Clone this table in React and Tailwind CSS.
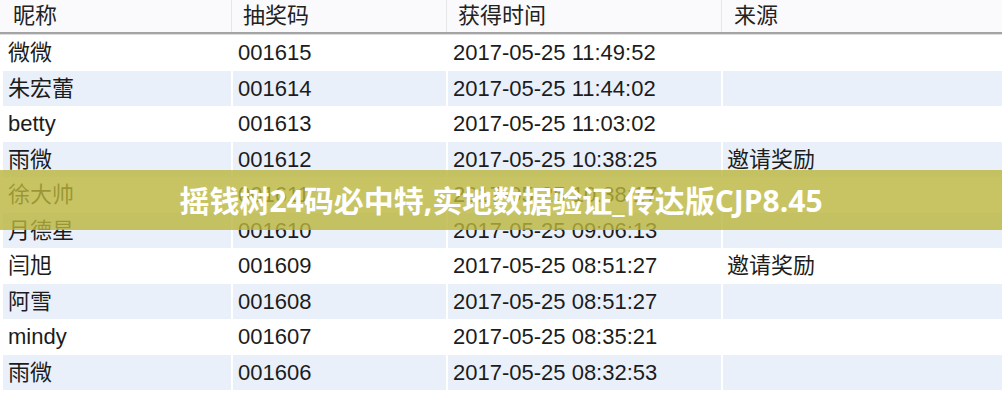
const FONT = { fontFamily: '"Liberation Sans", "Noto Sans CJK SC", sans-serif' }

const rows = [
  ['微微', '001615', '2017-05-25 11:49:52', ''],
  ['朱宏蕾', '001614', '2017-05-25 11:44:02', ''],
  ['betty', '001613', '2017-05-25 11:03:02', ''],
  ['雨微', '001612', '2017-05-25 10:38:25', '邀请奖励'],
  ['徐大帅', '001611', '2017-05-25 10:38:17', ''],
  ['月德星', '001610', '2017-05-25 09:06:13', ''],
  ['闫旭', '001609', '2017-05-25 08:51:27', '邀请奖励'],
  ['阿雪', '001608', '2017-05-25 08:51:27', ''],
  ['mindy', '001607', '2017-05-25 08:35:21', ''],
  ['雨微', '001606', '2017-05-25 08:32:53', ''],
]

export default function App() {
  return (
    <div className="relative w-[1002px] h-[400px] overflow-hidden bg-white text-[22px] text-[#1c1c1c]" style={FONT}>
      {/* header */}
      <div className="flex h-[32px] bg-[#fafafc] leading-[32px] text-[#222]">
        <div className="w-[232px] pl-[13px] border-r border-[#e6e6ea]">昵称</div>
        <div className="w-[215px] pl-[11px] border-r border-[#e6e6ea]">抽奖码</div>
        <div className="w-[275px] pl-[11px] border-r border-[#e6e6ea]">获得时间</div>
        <div className="flex-1 pl-[12px]">来源</div>
      </div>
      <div className="h-[2px] bg-[#a4a4a4]" />
      <div className="h-[1px] bg-[#dedede]" />

      {/* rows */}
      {rows.map((r, i) => {
        const cell = i % 2 === 1 ? 'bg-[#e9f0fa]' : 'bg-white'
        return (
          <div key={i} className="flex h-[35.5px] items-center gap-[2px] pl-[3px] leading-[35.5px]">
            <div className={`w-[228px] h-full pl-[5px] ${cell}`}>{r[0]}</div>
            <div className={`w-[213px] h-full pl-[5px] ${cell}`}>{r[1]}</div>
            <div className={`w-[273px] h-full pl-[5px] ${cell}`}>{r[2]}</div>
            <div className={`flex-1 h-full pl-[4px] ${cell}`}>{r[3]}</div>
          </div>
        )
      })}

      {/* banner overlay */}
      <div
        className="absolute left-0 right-0 top-[170px] h-[60px] flex items-center justify-center bg-[rgba(186,181,61,0.8)] text-white font-bold text-[30px]"
        style={{ fontFamily: '"Open Sans", "Noto Sans CJK SC", sans-serif' }}
      >
        摇钱树24码必中特,实地数据验证_传达版CJP8.45
      </div>
    </div>
  )
}
